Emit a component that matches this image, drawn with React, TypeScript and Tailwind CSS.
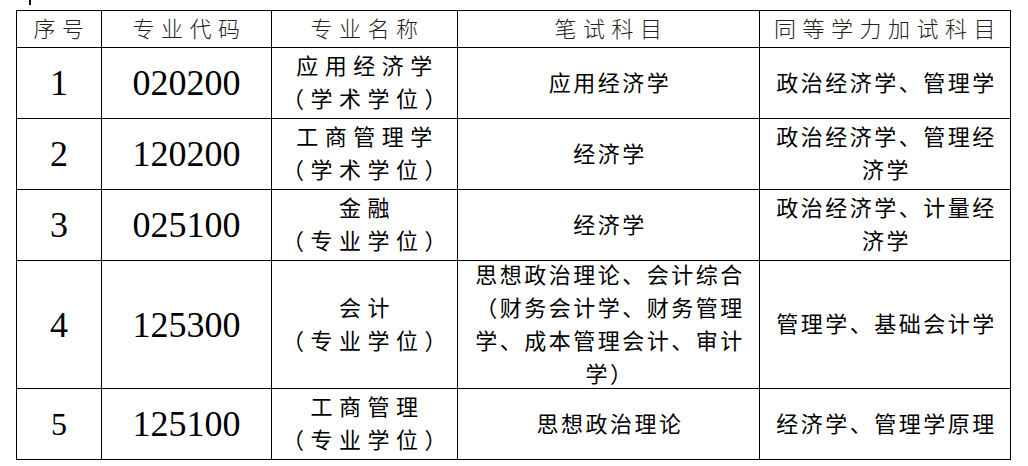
const serif = "font-['Liberation_Serif','Noto_Sans_CJK_SC',serif]";

interface Row {
  no: string;
  noSize?: string;
  code: string;
  name: string[];
  exam: string[];
  extra: string[];
  h: string;
}

const rows: Row[] = [
  { no: '1', code: '020200', name: ['应用经济学', '（学术学位）'], exam: ['应用经济学'], extra: ['政治经济学、管理学'], h: 'h-[70px]' },
  { no: '2', code: '120200', name: ['工商管理学', '（学术学位）'], exam: ['经济学'], extra: ['政治经济学、管理经', '济学'], h: 'h-[70px]' },
  { no: '3', code: '025100', name: ['金融', '（专业学位）'], exam: ['经济学'], extra: ['政治经济学、计量经', '济学'], h: 'h-[70px]' },
  {
    no: '4',
    code: '125300',
    name: ['会计', '（专业学位）'],
    exam: ['思想政治理论、会计综合', '（财务会计学、财务管理', '学、成本管理会计、审计', '学）'],
    extra: ['管理学、基础会计学'],
    h: 'h-[127px]',
  },
  { no: '5', noSize: 'text-[32px]', code: '125100', name: ['工商管理', '（专业学位）'], exam: ['思想政治理论'], extra: ['经济学、管理学原理'], h: 'h-[70px]' },
];

const headers = ['序号', '专业代码', '专业名称', '笔试科目', '同等学力加试科目'];

const Lines = ({ lines, wide }: { lines: string[]; wide?: boolean }) => (
  <div className={`flex flex-col items-center text-[22px] leading-[33px] ${wide ? 'tracking-[6.5px] pl-[6px]' : 'tracking-[2.5px] pl-[3px]'}`}>
    {lines.map((l, i) => (
      <span key={i} className="whitespace-nowrap">{l}</span>
    ))}
  </div>
);

export default function App() {
  return (
    <div className={`w-[1028px] h-[466px] bg-white text-black ${serif}`}>
      {/* stray cursor mark above the table */}
      <div className="ml-[29px] w-[2px] h-[5px] bg-black" />
      <div className="mt-[5px] ml-[16px] w-fit bg-black p-px grid grid-cols-[84px_169px_185px_301px_250px] gap-px">
        {headers.map((h) => (
          <div key={h} className="h-[36px] bg-white flex items-center justify-center text-[22px] tracking-[6.5px] pl-[6px] text-[#222] font-light">
            {h}
          </div>
        ))}
        {rows.map((r) => (
          <div key={r.no} className="contents">
            <div className={`${r.h} bg-white flex items-center justify-center ${r.noSize ?? 'text-[36px]'}`}>{r.no}</div>
            <div className={`${r.h} bg-white flex items-center justify-center text-[36px]`}>{r.code}</div>
            <div className={`${r.h} bg-white flex items-center justify-center`}>
              <Lines lines={r.name} wide />
            </div>
            <div className={`${r.h} bg-white flex items-center justify-center`}>
              <Lines lines={r.exam} />
            </div>
            <div className={`${r.h} bg-white flex items-center justify-center`}>
              <Lines lines={r.extra} />
            </div>
          </div>
        ))}
      </div>
    </div>
  );
}
